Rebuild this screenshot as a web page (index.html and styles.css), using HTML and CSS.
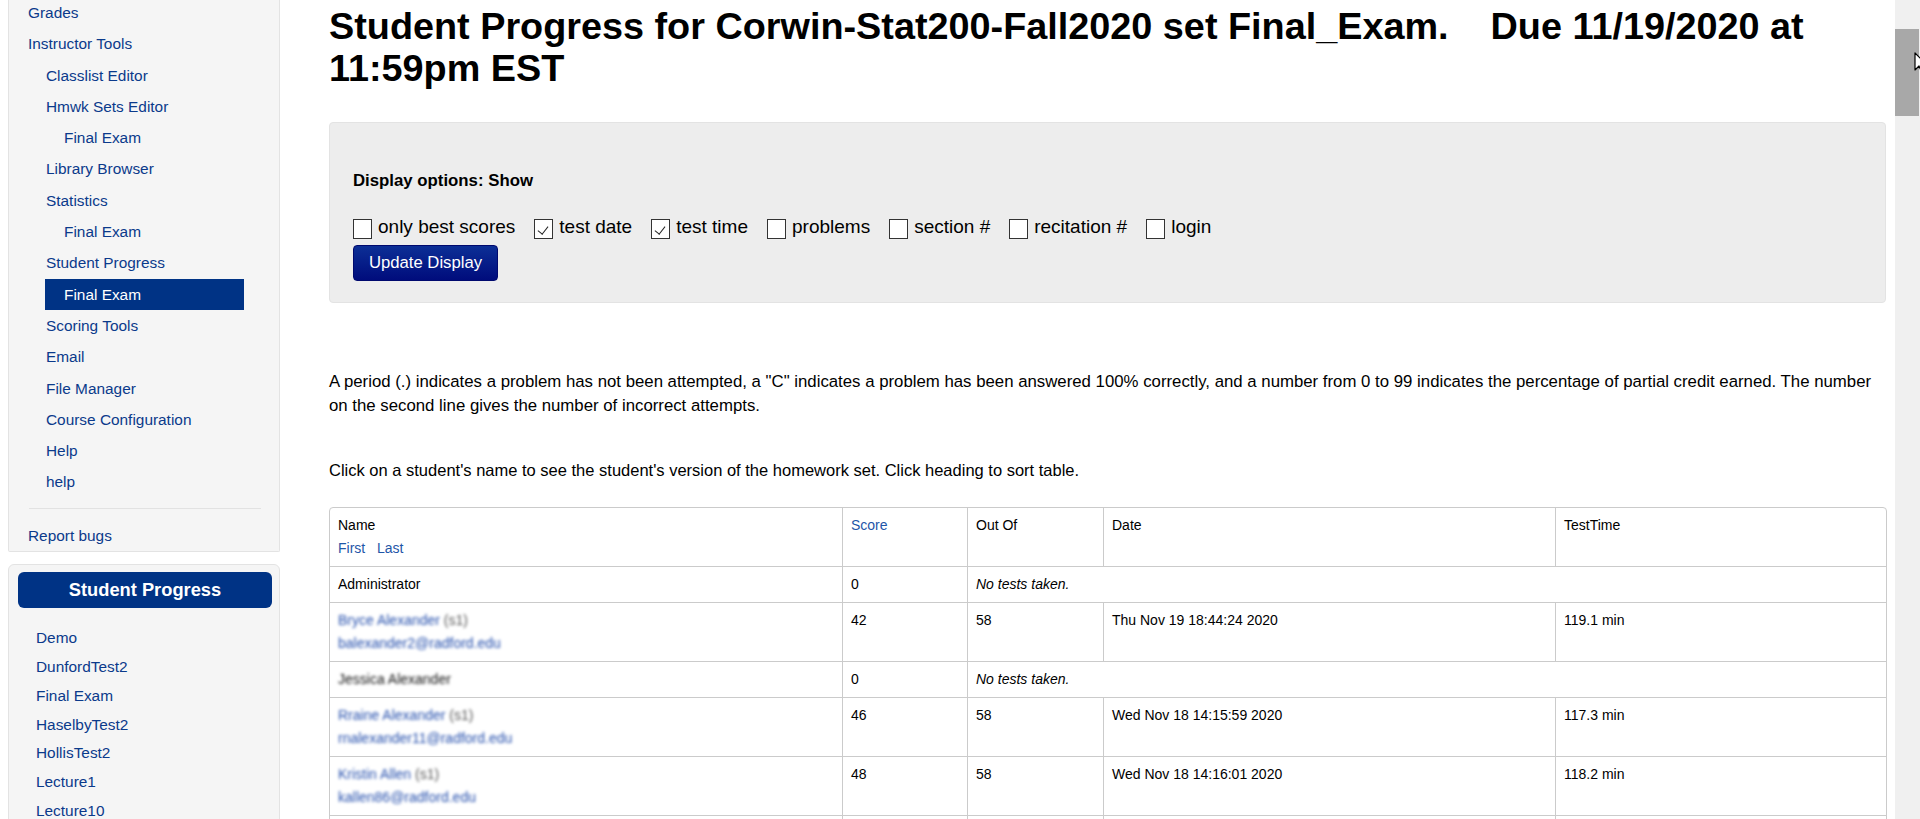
FILE: index.html
```html
<!DOCTYPE html>
<html lang="en">
<head>
<meta charset="utf-8">
<title>Student Progress</title>
<link rel="stylesheet" href="styles.css">
</head>
<body>
<div class="page">
  <aside class="sidebar">
    <nav class="panel site-nav">
      <a class="nav l0" href="#">Grades</a>
      <a class="nav l0" href="#">Instructor Tools</a>
      <a class="nav l1" href="#">Classlist Editor</a>
      <a class="nav l1" href="#">Hmwk Sets Editor</a>
      <a class="nav l2" href="#">Final Exam</a>
      <a class="nav l1" href="#">Library Browser</a>
      <a class="nav l1" href="#">Statistics</a>
      <a class="nav l2" href="#">Final Exam</a>
      <a class="nav l1" href="#">Student Progress</a>
      <a class="nav l2 active" href="#">Final Exam</a>
      <a class="nav l1" href="#">Scoring Tools</a>
      <a class="nav l1" href="#">Email</a>
      <a class="nav l1" href="#">File Manager</a>
      <a class="nav l1" href="#">Course Configuration</a>
      <a class="nav l1" href="#">Help</a>
      <a class="nav l1" href="#">help</a>
      <hr class="sep">
      <a class="nav l0 bugs" href="#">Report bugs</a>
    </nav>
    <div class="panel sets">
      <div class="sets-head">Student Progress</div>
      <a class="set" href="#">Demo</a>
      <a class="set" href="#">DunfordTest2</a>
      <a class="set" href="#">Final Exam</a>
      <a class="set" href="#">HaselbyTest2</a>
      <a class="set" href="#">HollisTest2</a>
      <a class="set" href="#">Lecture1</a>
      <a class="set" href="#">Lecture10</a>
      <a class="set" href="#">Lecture11</a>
    </div>
  </aside>

  <main class="main">
    <h1 class="title">Student Progress for Corwin-Stat200-Fall2020 set Final_Exam.&nbsp;&nbsp;&nbsp; Due 11/19/2020 at 11:59pm EST</h1>

    <form class="options">
      <div class="opt-title">Display options: Show</div>
      <div class="checks">
        <label class="check"><input type="checkbox"><span>only best scores</span></label>
        <label class="check"><input type="checkbox" checked><span>test date</span></label>
        <label class="check"><input type="checkbox" checked><span>test time</span></label>
        <label class="check"><input type="checkbox"><span>problems</span></label>
        <label class="check"><input type="checkbox"><span>section #</span></label>
        <label class="check"><input type="checkbox"><span>recitation #</span></label>
        <label class="check"><input type="checkbox"><span>login</span></label>
      </div>
      <button type="button" class="btn">Update Display</button>
    </form>

    <p class="legend">A period (.) indicates a problem has not been attempted, a "C" indicates a problem has been answered 100% correctly, and a number from 0 to 99 indicates the percentage of partial credit earned. The number on the second line gives the number of incorrect attempts.</p>

    <p class="hint">Click on a student's name to see the student's version of the homework set. Click heading to sort table.</p>

    <table class="progress">
      <colgroup>
        <col class="c-name"><col class="c-score"><col class="c-out"><col class="c-date"><col class="c-time">
      </colgroup>
      <thead>
        <tr>
          <th>Name<br><a href="#">First</a>&nbsp;&nbsp; <a href="#">Last</a></th>
          <th><a href="#">Score</a></th>
          <th>Out Of</th>
          <th>Date</th>
          <th>TestTime</th>
        </tr>
      </thead>
      <tbody>
        <tr>
          <td>Administrator</td>
          <td>0</td>
          <td colspan="3"><em>No tests taken.</em></td>
        </tr>
        <tr>
          <td><span class="blur link">Bryce Alexander <span class="sec">(s1)</span></span><br><span class="blur link">balexander2@radford.edu</span></td>
          <td>42</td>
          <td>58</td>
          <td>Thu Nov 19 18:44:24 2020</td>
          <td>119.1 min</td>
        </tr>
        <tr>
          <td><span class="blur dark">Jessica Alexander</span></td>
          <td>0</td>
          <td colspan="3"><em>No tests taken.</em></td>
        </tr>
        <tr>
          <td><span class="blur link">Rraine Alexander <span class="sec">(s1)</span></span><br><span class="blur link">rnalexander11@radford.edu</span></td>
          <td>46</td>
          <td>58</td>
          <td>Wed Nov 18 14:15:59 2020</td>
          <td>117.3 min</td>
        </tr>
        <tr>
          <td><span class="blur link">Kristin Allen <span class="sec">(s1)</span></span><br><span class="blur link">kallen86@radford.edu</span></td>
          <td>48</td>
          <td>58</td>
          <td>Wed Nov 18 14:16:01 2020</td>
          <td>118.2 min</td>
        </tr>
        <tr>
          <td><span class="blur link">Maria Allen <span class="sec">(s1)</span></span><br><span class="blur link">mallen@radford.edu</span></td>
          <td>50</td>
          <td>58</td>
          <td>Wed Nov 18 14:20:11 2020</td>
          <td>116.0 min</td>
        </tr>
      </tbody>
    </table>
  </main>

  <div class="scrollbar">
    <div class="thumb"></div>
  </div>
</div>
<svg class="cursor" width="14" height="24" viewBox="0 0 14 24" aria-hidden="true">
  <path d="M1 1 L1 18 L5 14 L8 21 L11 20 L8 13 L13 13 Z" fill="#fff" stroke="#000" stroke-width="1.2" stroke-linejoin="round"/>
</svg>
</body>
</html>
```

FILE: styles.css
```css
html, body {
  margin: 0;
  padding: 0;
  height: 819px;
  overflow: hidden;
  background: #fff;
}

body {
  font-family: "Liberation Sans", Arial, sans-serif;
  color: #000;
  position: relative;
}

a { text-decoration: none; }

.page {
  display: flex;
  align-items: flex-start;
  height: 819px;
}

/* ---------- sidebar ---------- */
.sidebar {
  width: 272px;
  margin-left: 8px;
  flex: none;
  display: flex;
  flex-direction: column;
  gap: 12px;
}

.panel {
  background: #f5f5f5;
  border: 1px solid #e3e3e3;
  box-sizing: border-box;
}

.site-nav {
  margin-top: -3px;
  border-top: none;
  border-radius: 0 0 2px 2px;
  display: flex;
  flex-direction: column;
  padding-bottom: 0;
}

.nav {
  display: block;
  font-size: 15.4px;
  line-height: 31.3px;
  height: 31.3px;
  color: #0b3a8b;
  white-space: nowrap;
}

.nav.l0 { padding-left: 19px; }
.nav.l1 { margin-left: 36px; padding-left: 1px; width: 199px; box-sizing: border-box; }
.nav.l2 { margin-left: 36px; padding-left: 19px; width: 199px; box-sizing: border-box; }

.nav.active {
  background: #003385;
  color: #fff;
}

.sep {
  border: none;
  border-top: 1px solid #e2e2e2;
  margin: 10px 18px 11px 20px;
  height: 0;
}

.nav.bugs { height: 31px; }

.sets {
  border-radius: 6px;
  padding: 7px 7px 0 9px;
  display: flex;
  flex-direction: column;
  min-height: 300px;
}

.sets-head {
  height: 36px;
  line-height: 36px;
  border-radius: 6px;
  background: #003385;
  color: #fff;
  font-weight: bold;
  font-size: 18.3px;
  text-align: center;
  margin-bottom: 16.5px;
}

.set {
  display: block;
  font-size: 15.4px;
  line-height: 28.8px;
  height: 28.8px;
  padding-left: 18px;
  color: #0b3a8b;
}

/* ---------- main ---------- */
.main {
  width: 1557px;
  margin-left: 49px;
  flex: none;
}

.title {
  margin: 4.5px 0 0 0;
  font-size: 37.8px;
  line-height: 42.6px;
  font-weight: bold;
}

.options {
  margin-top: 32.5px;
  height: 181px;
  box-sizing: border-box;
  background: #ededed;
  border: 1px solid #e3e3e3;
  border-radius: 4px;
  padding: 48px 20px 0 23px;
}

.opt-title {
  font-weight: bold;
  font-size: 16.8px;
  line-height: 20px;
}

.checks {
  display: flex;
  align-items: flex-start;
  gap: 19px;
  margin-top: 25px;
  height: 26px;
}

.check {
  display: flex;
  align-items: flex-start;
  font-size: 19px;
  line-height: 21px;
}

.check span { margin-left: 6px; }

.check input {
  appearance: none;
  -webkit-appearance: none;
  width: 19px;
  height: 20px;
  margin: 3px 0 0 0;
  border: 1px solid #333;
  background: #fff;
  box-sizing: border-box;
  position: relative;
  flex: none;
}

.check input:checked::after {
  content: "";
  position: absolute;
  left: 5px;
  top: 4px;
  width: 5px;
  height: 9px;
  border-right: 1.4px solid #222;
  border-bottom: 1.4px solid #222;
  transform: rotate(38deg);
}

.btn {
  display: block;
  margin-top: 3px;
  width: 145px;
  height: 36px;
  border: 1px solid #00096e;
  border-radius: 4px;
  background: linear-gradient(to bottom, #0c2f96 0%, #000c7c 100%);
  color: #fff;
  font-family: "Liberation Sans", Arial, sans-serif;
  font-size: 16.7px;
  padding: 0;
}

.legend {
  margin: 66.5px 0 0;
  font-size: 16.8px;
  line-height: 24.3px;
}

.hint {
  margin: 39.5px 0 0;
  font-size: 16.5px;
  line-height: 24.3px;
}

/* ---------- table ---------- */
.progress {
  margin-top: 24.5px;
  width: 1556px;
  border-collapse: separate;
  border-spacing: 0;
  border: 1px solid #cbcbcb;
  border-radius: 4px;
  font-size: 14px;
  line-height: 23px;
  table-layout: fixed;
}

.c-name { width: 512px; }
.c-score { width: 125px; }
.c-out { width: 136px; }
.c-date { width: 452px; }
.c-time { width: 331px; }

.progress th,
.progress td {
  padding: 6px 8px;
  text-align: left;
  vertical-align: top;
  font-weight: normal;
  border-left: 1px solid #cbcbcb;
  border-top: 1px solid #cbcbcb;
  white-space: nowrap;
}

.progress th { border-top: none; }
.progress tr > :first-child { border-left: none; }

.progress a { color: #1f56a8; }

.progress em { font-style: italic; }

.blur {
  filter: blur(1.4px);
}
.blur.link { color: #2650ad; }
.blur.dark { color: #111; }
.sec { color: #555; }

/* ---------- scrollbar ---------- */
.scrollbar {
  margin-left: auto;
  width: 25px;
  height: 819px;
  background: #f0f0f0;
  flex: none;
  position: relative;
}

.thumb {
  margin-top: 29px;
  width: 24px;
  height: 87px;
  background: #a8a8a8;
}

.cursor {
  position: absolute;
  left: 1914px;
  top: 52px;
}
```
